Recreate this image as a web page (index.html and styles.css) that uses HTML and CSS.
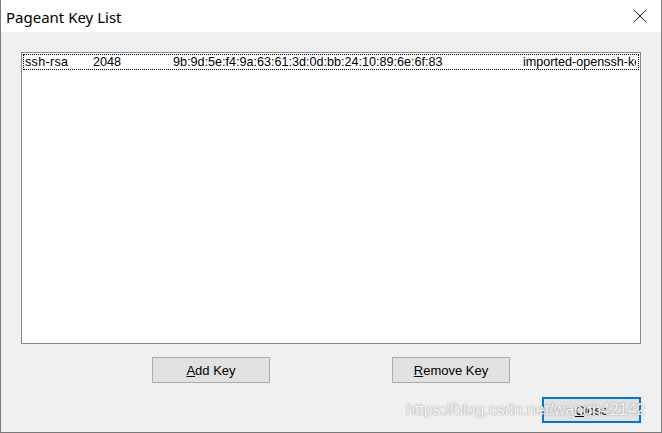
FILE: index.html
```html
<!DOCTYPE html>
<html>
<head>
<meta charset="utf-8">
<title>Pageant Key List</title>
<link rel="stylesheet" href="styles.css">
</head>
<body>
<div class="window">
  <div class="titlebar">
    <span class="title">Pageant Key List</span>
    <svg class="close-x" width="14" height="14" viewBox="0 0 14 14"><path d="M1 1 L13 13 M13 1 L1 13" stroke="#1a1a1a" stroke-width="1" fill="none"/></svg>
  </div>
  <div class="body">
    <div class="listbox">
      <div class="row">
        <span class="c1">ssh-rsa</span>
        <span class="c2">2048</span>
        <span class="c3">9b:9d:5e:f4:9a:63:61:3d:0d:bb:24:10:89:6e:6f:83</span>
        <span class="c4">imported-openssh-key</span>
      </div>
    </div>
    <div class="btnrow">
      <button class="btn add"><u>A</u>dd Key</button>
      <button class="btn remove"><u>R</u>emove Key</button>
    </div>
    <div class="closerow">
      <button class="btn default"><u>C</u>lose</button>
    </div>
  </div>
  <div class="watermark">https://blog.csdn.net/wangh42142</div>
</div>
</body>
</html>
```

FILE: styles.css
```css
html, body {
  margin: 0;
  padding: 0;
  background: #f0f0f0;
}
.window {
  position: relative;
  width: 660px;
  height: 432px;
  border-left: 1px solid #7a7a7a;
  border-right: 1px solid #7a7a7a;
  border-bottom: 1px solid #7a7a7a;
  background: #f0f0f0;
  overflow: hidden;
}
.titlebar {
  height: 32px;
  background: #ffffff;
  display: flex;
  align-items: center;
  justify-content: space-between;
  padding: 0 14px 0 5px;
}
.title {
  font-family: "Noto Sans", "Open Sans", sans-serif;
  font-size: 15px;
  color: #000;
  margin-top: 1px;
}
.close-x {
  display: block;
}
.body {
  padding: 20px 20px 0 20px;
}
.listbox {
  height: 288px;
  border: 1px solid #828790;
  background: #ffffff;
  padding: 1px;
}
.row {
  position: relative;
  height: 14px;
  border: 1px dotted #000;
  font-family: "Liberation Sans", Arial, sans-serif;
  font-size: 12.6px;
  line-height: 14px;
  color: #000;
  white-space: nowrap;
  overflow: hidden;
}
.c1 { position: absolute; left: 1px; top: 0; letter-spacing: 0.3px; }
.c2 { position: absolute; left: 69px; top: 0; }
.c3 { position: absolute; left: 149px; top: 0; }
.c4 { position: absolute; left: 499px; top: 0; width: 113px; overflow: hidden; }
.btnrow {
  display: flex;
  margin-top: 13px;
}
.btn {
  height: 26px;
  background: #e1e1e1;
  border: 1px solid #adadad;
  font-family: "Liberation Sans", Arial, sans-serif;
  font-size: 13px;
  color: #000;
  padding: 0;
  margin: 0;
}
.add {
  width: 118px;
  margin-left: 131px;
}
.remove {
  width: 118px;
  margin-left: 122px;
}
.closerow {
  display: flex;
  justify-content: flex-end;
  margin-top: 14px;
}
.default {
  width: 99px;
  border: 2px solid #0078d7;
}
.watermark {
  position: absolute;
  left: 405px;
  top: 401px;
  font-family: "Liberation Sans", Arial, sans-serif;
  font-size: 16px;
  color: rgba(255, 255, 255, 0.95);
  text-shadow: 0 0 1px rgba(90, 90, 90, 0.6), 0 0 2px rgba(120, 120, 120, 0.4);
  white-space: nowrap;
}
```
